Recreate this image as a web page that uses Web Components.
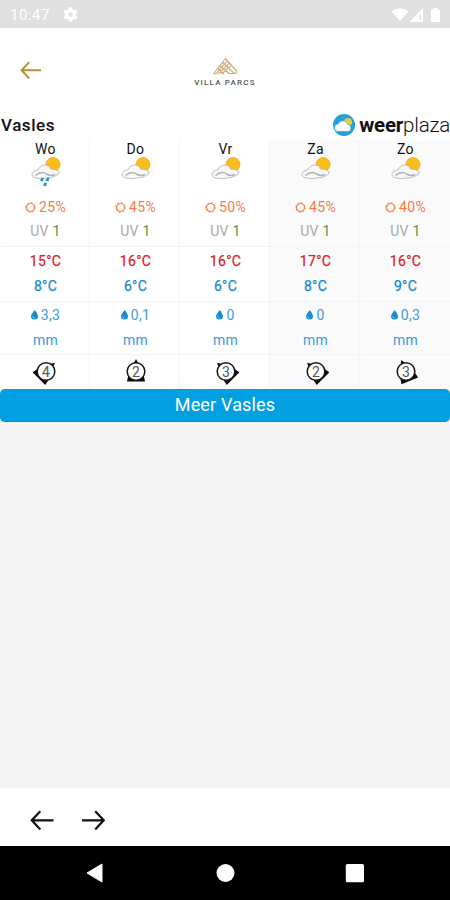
<!DOCTYPE html>
<html lang="nl">
<head>
<meta charset="utf-8">
<title>Weer Vasles</title>
<style>
html, body {
	margin: 0;
	height: 100%;
	overflow: hidden;
	font-family: Roboto, "Liberation Sans", sans-serif;
}
</style>
</head>
<body>
<weather-app></weather-app>
<script>
//#region STATUS BAR
const statusBar_template = document.createElement("template");
statusBar_template.innerHTML = /* html */ `
<style>
:host {
	display: flex;
	align-items: center;
	box-sizing: border-box;
	height: 28px;
	padding: 1px 8px 0 10px;
	background: #e0e0e0;
	color: #fff;
	font-size: 15px;
	letter-spacing: 0.5px;
}
.gear { margin-left: 13px; }
.right { margin-left: auto; }
</style>
<span>10:47</span>
<svg class="gear" width="15" height="15" viewBox="2 2 20 20" fill="#fff"><path d="M19.14 12.94a7 7 0 0 0 0-1.88l2.03-1.58a.5.5 0 0 0 .12-.61l-1.92-3.32a.5.5 0 0 0-.59-.22l-2.39.96a7 7 0 0 0-1.62-.94l-.36-2.54a.5.5 0 0 0-.48-.41h-3.84a.5.5 0 0 0-.47.41l-.36 2.54a7 7 0 0 0-1.62.94l-2.39-.96a.5.5 0 0 0-.59.22L2.74 8.87a.5.5 0 0 0 .12.61l2.03 1.58a7 7 0 0 0 0 1.88l-2.03 1.58a.5.5 0 0 0-.12.61l1.92 3.32c.12.22.37.29.59.22l2.39-.96a7 7 0 0 0 1.62.94l.36 2.54c.05.24.24.41.48.41h3.84c.24 0 .44-.17.47-.41l.36-2.54a7 7 0 0 0 1.62-.94l2.39.96c.22.08.47 0 .59-.22l1.92-3.32a.5.5 0 0 0-.12-.61zM12 15a3 3 0 1 1 0-6 3 3 0 0 1 0 6z"/></svg>
<svg class="right" width="52" height="16" viewBox="0 0 52 16" fill="#fff">
	<path d="M1.500 4.500Q10-2 18.500 4.500L10 14z"/>
	<path d="M19.500 15L33 1V15z"/><path d="M29.500 7.500h1.500v5.500h-1.500z" fill="#e0e0e0"/>
	<path d="M43.500 1h4v1.500h2.500V15h-9V2.500h2.500z"/>
</svg>
`;

window.customElements.define(
	"status-bar",
	class extends HTMLElement {
		constructor() {
			super();
			this._shadowRoot = this.attachShadow({mode: "open"});
			this._shadowRoot.appendChild(statusBar_template.content.cloneNode(true));
		}
	}
);
//#endregion STATUS BAR

//#region ARROW
window.customElements.define(
	"arrow-icon",
	class extends HTMLElement {
		constructor() {
			super();
			this._shadowRoot = this.attachShadow({mode: "open"});
		}

		connectedCallback() {
			const w = this.getAttribute("width");
			const flip = this.hasAttribute("right") ? "transform: scaleX(-1);" : "";
			this._shadowRoot.innerHTML = /* html */ `
<style>
:host { display: block; line-height: 0; }
svg { ${flip} }
</style>
<svg width="${w}" height="${w * 0.88}" viewBox="0 0 24 21" fill="none" stroke="currentColor" stroke-width="2.300"><path d="M2 10.500H24M10.500 1.200L1.800 10.500L10.500 19.800"/></svg>`;
		}
	}
);
//#endregion ARROW

//#region HEADER
const appHeader_template = document.createElement("template");
appHeader_template.innerHTML = /* html */ `
<style>
:host {
	display: grid;
	grid-template-columns: 1fr 66px 1fr;
	align-items: center;
	height: 84px;
	background: #fff;
}
arrow-icon { color: #b8913a; margin-left: 20px; }
.logo {
	display: flex;
	flex-direction: column;
	align-items: center;
	padding-top: 4px;
}
.name {
	margin-top: 3px;
	font: 500 8px/9px Roboto, sans-serif;
	letter-spacing: 1.2px;
	white-space: nowrap;
	color: #555;
}
</style>
<arrow-icon width="21"></arrow-icon>
<div class="logo">
	<svg width="25" height="18" viewBox="0 0 25 18" fill="none" stroke="#c9b078" stroke-width="1.200" stroke-linejoin="round" stroke-linecap="round">
		<path d="M1 16L12.500 1.500L23.500 14q.5 2.500-2 2.500L9.500 5.500"/>
		<path d="M1 16.500L3 16.800L14 4M5.500 16.800L15.800 6.500M9 16.500L17.500 9M7 8.500L16 16.500H21M5 11.500L10.500 16.500"/>
	</svg>
	<span class="name">VILLA PARCS</span>
</div>
`;

window.customElements.define(
	"app-header",
	class extends HTMLElement {
		constructor() {
			super();
			this._shadowRoot = this.attachShadow({mode: "open"});
			this._shadowRoot.appendChild(appHeader_template.content.cloneNode(true));
		}
	}
);
//#endregion HEADER

//#region TITLE
const placeTitle_template = document.createElement("template");
placeTitle_template.innerHTML = /* html */ `
<style>
:host {
	display: flex;
	align-items: center;
	box-sizing: border-box;
	height: 28px;
	padding-bottom: 3px;
	background: #fff;
	color: #111;
}
.place { font-size: 17px; font-weight: 500; letter-spacing: 0.55px; padding-left: 1px; }
.brand {
	display: flex;
	align-items: center;
	margin-left: auto;
	font-size: 20.5px;
	line-height: 24px;
	letter-spacing: -0.2px;
}
svg { margin-right: 4px; }
b { font-weight: 700; }
i { font-style: normal; font-weight: 300; }
</style>
<span class="place"><slot></slot></span>
<div class="brand">
	<svg width="22" height="22" viewBox="0 0 22 22">
		<circle cx="11" cy="11" r="11" fill="#249fdf"/>
		<circle cx="15" cy="8" r="4" fill="#e8cf35"/>
		<path d="M5.500 17.500a3.800 3.800 0 0 1-.4-7.600 5.200 5.200 0 0 1 9.700.6A3.600 3.600 0 0 1 15.500 17.500z" fill="#fff" stroke="#249fdf" stroke-width=".6"/>
	</svg>
	<b>weer</b><i>plaza</i>
</div>
`;

window.customElements.define(
	"place-title",
	class extends HTMLElement {
		constructor() {
			super();
			this._shadowRoot = this.attachShadow({mode: "open"});
			this._shadowRoot.appendChild(placeTitle_template.content.cloneNode(true));
		}
	}
);
//#endregion TITLE

//#region DAY
window.customElements.define(
	"weather-day",
	class extends HTMLElement {
		constructor() {
			super();
			this._shadowRoot = this.attachShadow({mode: "open"});
		}

		connectedCallback() {
			const d = this.dataset;
			const drops = this.hasAttribute("rain")
				? `<g fill="#2794d2"><path d="M10.500 21.500l2.500.6-1.200 3.400-2.800-.8zM16 21.500l2.500.6-1.200 3.400-2.800-.8zM13.300 26.500l2.600.4-1 3.600-2.800-1z"/></g>`
				: "";
			this._shadowRoot.innerHTML = /* html */ `
<style>
:host {
	display: block;
	box-sizing: border-box;
	height: 249px;
	padding-left: 1px;
	text-align: center;
	font-size: 14px;
	line-height: 25px;
	letter-spacing: 0.3px;
	background: #fff;
}
:host(:not(:last-child)) { box-shadow: inset -1px 0 #f5f5f5; }
:host([weekend]) { background: #fafafa; }
.row { border-bottom: 1px solid #f3f3f3; box-sizing: border-box; }
.top { height: 107px; }
.name { line-height: 18px; height: 16px; color: #111; font-size: 14px; }
.sky { display: block; margin: 0 auto; height: 38px; }
.sun { color: #f77b45; display: flex; align-items: center; justify-content: center; gap: 3px; height: 25px; padding-top: 1px; box-sizing: border-box; }
.uv { height: 24px; color: #aaa; }
.uv span { color: #668d50; }
.temp { height: 55px; padding-top: 2px; }
.max { color: #d81e28; }
.min { color: #1688cf; }
.temp div { -webkit-text-stroke: 0.25px; }
.rain { height: 53px; padding-top: 1px; color: #3d9bd8; }
.rain svg { margin-right: 3px; }
.wind { display: block; margin: 4px auto 0; }
</style>
<div class="row top">
	<div class="name">${d.name}</div>
	<svg class="sky" width="30" height="38" viewBox="0 0 30 38">
		<circle cx="22" cy="8.500" r="7" fill="#fbbd18" stroke="#f5a52a" stroke-width=".8"/>
		<path d="M5 22q-4.500-1-4-4.500 1-3 5.500-3.500 3-5.500 8.500-5 4 .5 4.500 4 5.500-.2 8.500 2.500 1 3-4 4.500-3 2-8 2-6 1.500-11 0z" fill="#f8f8f8" stroke="#b0b0b0" stroke-width=".8"/>
		<path d="M4.500 19.500q6-5 11-1.500 4 2.500 8.500.5" fill="none" stroke="#b2b2b2" stroke-width="1.500"/>
		${drops}
	</svg>
	<div class="sun">
		<svg width="11" height="11" viewBox="0 0 11 11" fill="none" stroke="currentColor"><circle cx="5.500" cy="5.500" r="4" stroke-width="1.200"/><circle cx="5.500" cy="5.500" r="4.900" stroke-width=".8" stroke-dasharray="1.600 2.248"/></svg>
		<span>${d.sun}</span>
	</div>
	<div class="uv">UV <span>1</span></div>
</div>
<div class="row temp">
	<div class="max">${d.max}</div>
	<div class="min">${d.min}</div>
</div>
<div class="row rain">
	<div><svg width="7" height="10" viewBox="0 0 7 10"><path d="M3.800 0Q7 4.300 7 6.300a3.500 3.300 0 0 1-7 0Q0 4.500 3.800 0z" fill="#168bd2"/><path d="M1.500 6.200q.3 1.800 2 2" fill="none" stroke="#9dd2f2" stroke-width=".8"/></svg>${d.rain}</div>
	<div>mm</div>
</div>
<svg class="wind" width="26" height="26" viewBox="-13 -12.500 26 26">
	<g transform="rotate(${d.turn})">
		<path d="M0-12.500L2.500-8H-2.500zM-9 10L-7.500 3H7.500L9 10z" fill="#0b0b0b"/>
	</g>
	<circle r="8.800" fill="#fff" stroke="#161616" stroke-width="1.500"/>
	<text y="5" text-anchor="middle" font-size="14" letter-spacing="0" fill="#555">${d.wind}</text>
</svg>`;
		}
	}
);
//#endregion DAY

//#region NAVIGATION
const browserBar_template = document.createElement("template");
browserBar_template.innerHTML = /* html */ `
<style>
:host {
	display: flex;
	align-items: center;
	gap: 28px;
	box-sizing: border-box;
	height: 58px;
	padding: 6px 0 0 30px;
	background: #fff;
	color: #111;
}
</style>
<arrow-icon width="23.5"></arrow-icon>
<arrow-icon width="23.5" right></arrow-icon>
`;

window.customElements.define(
	"browser-bar",
	class extends HTMLElement {
		constructor() {
			super();
			this._shadowRoot = this.attachShadow({mode: "open"});
			this._shadowRoot.appendChild(browserBar_template.content.cloneNode(true));
		}
	}
);

const systemNav_template = document.createElement("template");
systemNav_template.innerHTML = /* html */ `
<style>
:host {
	display: flex;
	align-items: center;
	justify-content: space-between;
	box-sizing: border-box;
	height: 54px;
	padding: 0 85px;
	background: #000;
}
</style>
<svg width="20" height="20" viewBox="0 0 20 20"><path d="M2 10L17 1V19z" fill="#fff" stroke="#fff" stroke-linejoin="round"/></svg>
<svg width="20" height="20" viewBox="0 0 20 20"><circle cx="10.500" cy="10" r="9" fill="#fff"/></svg>
<svg width="20" height="20" viewBox="0 0 20 20"><rect x=".8" y="1" width="18.200" height="18.200" rx="1.500" fill="#fff"/></svg>
`;

window.customElements.define(
	"system-nav",
	class extends HTMLElement {
		constructor() {
			super();
			this._shadowRoot = this.attachShadow({mode: "open"});
			this._shadowRoot.appendChild(systemNav_template.content.cloneNode(true));
		}
	}
);
//#endregion NAVIGATION

//#region APP
const app_template = document.createElement("template");
app_template.innerHTML = /* html */ `
<style>
:host {
	display: flex;
	flex-direction: column;
	height: 900px;
	background: #f4f4f4;
}
.days { display: grid; grid-template-columns: repeat(5, 1fr); }
.more {
	height: 33px;
	box-sizing: border-box;
	border-bottom: 1px solid #1988c0;
	border-radius: 5px;
	background: #039fe3;
	color: #fff;
	text-align: center;
	font-size: 18px;
	line-height: 32px;
	letter-spacing: 0.15px;
}
browser-bar { margin-top: auto; }
</style>
<status-bar></status-bar>
<app-header></app-header>
<place-title>Vasles</place-title>
<div class="days">
	<weather-day data-name="Wo" data-sun="25%" data-max="15°C" data-min="8°C" data-rain="3,3" data-wind="4" data-turn="45" rain></weather-day>
	<weather-day data-name="Do" data-sun="45%" data-max="16°C" data-min="6°C" data-rain="0,1" data-wind="2" data-turn="0"></weather-day>
	<weather-day data-name="Vr" data-sun="50%" data-max="16°C" data-min="6°C" data-rain="0" data-wind="3" data-turn="-45"></weather-day>
	<weather-day data-name="Za" data-sun="45%" data-max="17°C" data-min="8°C" data-rain="0" data-wind="2" data-turn="-45" weekend></weather-day>
	<weather-day data-name="Zo" data-sun="40%" data-max="16°C" data-min="9°C" data-rain="0,3" data-wind="3" data-turn="-22" weekend></weather-day>
</div>
<div class="more">Meer Vasles</div>
<browser-bar></browser-bar>
<system-nav></system-nav>
`;

window.customElements.define(
	"weather-app",
	class extends HTMLElement {
		constructor() {
			super();
			this._shadowRoot = this.attachShadow({mode: "open"});
			this._shadowRoot.appendChild(app_template.content.cloneNode(true));
		}
	}
);
//#endregion APP
</script>
</body>
</html>
